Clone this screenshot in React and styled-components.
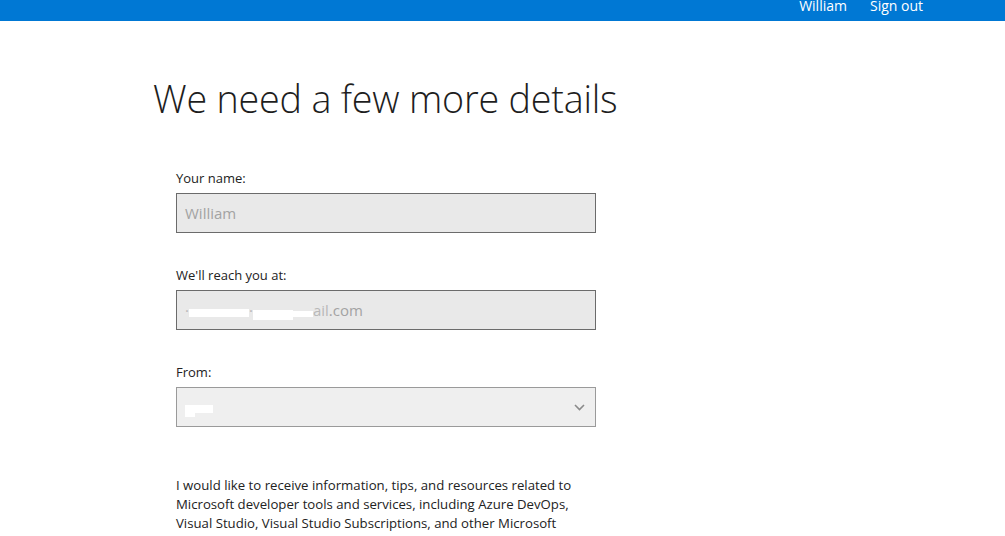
import React from "react";
import styled, { createGlobalStyle } from "styled-components";

const Global = createGlobalStyle`
  html, body { margin: 0; padding: 0; background: #fff; }
  body { font-family: "Open Sans", "Noto Sans", Arial, sans-serif; color: #222; overflow: hidden; }
`;

const TopBar = styled.header`
  height: 21px;
  background: #0078d4;
  display: flex;
  justify-content: flex-end;
  align-items: flex-end;
  overflow: hidden;
  padding-right: 82px;
  gap: 23px;
`;

const TopLink = styled.a`
  color: #fff;
  font-family: "Open Sans", sans-serif;
  font-size: 14px;
  line-height: 14px;
  margin-bottom: 8px;
  text-decoration: none;
`;

const Main = styled.main`
  padding: 52px 0 0 153px;
`;

const Title = styled.h1`
  margin: 0 0 44px;
  font-family: "Open Sans", sans-serif;
  font-weight: 300;
  font-size: 37.7px;
  line-height: 52px;
  color: #1e1e1e;
  letter-spacing: -0.2px;
`;

const Form = styled.form`
  padding-left: 23px;
  width: 420px;
  display: flex;
  flex-direction: column;
`;

const Field = styled.div`
  display: flex;
  flex-direction: column;
  gap: 6px;
  margin-bottom: 33px;
`;

const Label = styled.label`
  font-size: 13px;
  line-height: 18px;
  color: #222;
`;

const Box = styled.div`
  box-sizing: border-box;
  height: 40px;
  width: 420px;
  border: 1px solid ${(p) => (p.$light ? "#9a9a9a" : "#6b6b6b")};
  background: ${(p) => (p.$light ? "#efefef" : "#e9e9e9")};
  display: flex;
  align-items: center;
  justify-content: space-between;
  padding: 0 10px 0 8px;
  font-size: 15px;
  color: #a3a3a3;
`;

const Redact = styled.span`
  display: inline-block;
  background: #fff;
  height: ${(p) => p.$h || 10}px;
  width: ${(p) => p.$w}px;
  vertical-align: middle;
  margin-top: ${(p) => p.$t || 0}px;
`;

const Faint = styled.span`
  color: #b8b8b8;
`;

const Chevron = styled.svg`
  width: 11px;
  height: 7px;
`;

const Para = styled.p`
  margin: 16px 0 0;
  font-size: 13.2px;
  line-height: 19px;
  color: #222;
  width: 420px;
`;

export default function App() {
  return (
    <>
      <Global />
      <TopBar>
        <TopLink href="#">William</TopLink>
        <TopLink href="#">Sign out</TopLink>
      </TopBar>
      <Main>
        <Title>We need a few more details</Title>
        <Form>
          <Field>
            <Label>Your name:</Label>
            <Box>William</Box>
          </Field>
          <Field>
            <Label>We'll reach you at:</Label>
            <Box>
              <span>
                <Faint>·</Faint>
                <Redact $w={60} $h={8} $t={2} />
                <Faint>·</Faint>
                <Redact $w={40} $h={10} $t={6} />
                <Redact $w={20} $h={6} $t={4} />
                <Faint>ail</Faint>.com
              </span>
            </Box>
          </Field>
          <Field>
            <Label>From:</Label>
            <Box $light>
              <span>
                <Redact $w={10} $h={12} $t={4} />
                <Redact $w={18} $h={8} />
              </span>
              <Chevron viewBox="0 0 11 7">
                <path d="M1 1 L5.5 5.5 L10 1" fill="none" stroke="#8a8a8a" strokeWidth="1.6" />
              </Chevron>
            </Box>
          </Field>
          <Para>
            I would like to receive information, tips, and resources related to Microsoft developer tools and
            services, including Azure DevOps, Visual Studio, Visual Studio Subscriptions, and other Microsoft
          </Para>
        </Form>
      </Main>
    </>
  );
}
